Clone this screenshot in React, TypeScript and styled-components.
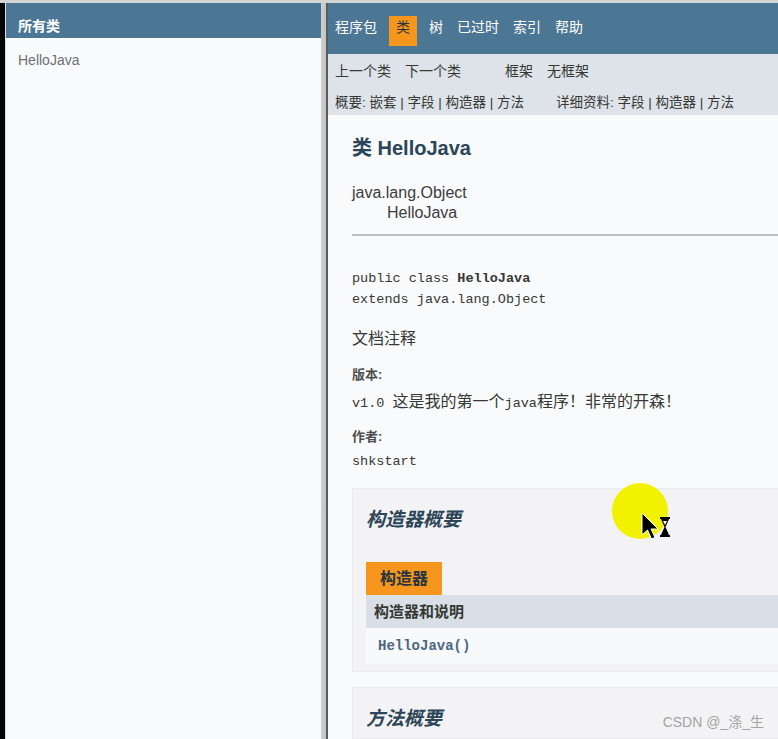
import React from "react";
import styled, { createGlobalStyle } from "styled-components";

const GlobalStyle = createGlobalStyle`
  html, body {
    margin: 0;
    padding: 0;
    overflow: hidden;
    background: #d4d4d4;
  }
  body {
    font-family: "Liberation Sans", "Noto Sans CJK SC", sans-serif;
  }
`;

const SANS = `"Liberation Sans", "Noto Sans CJK SC", sans-serif`;
const MONO = `"Liberation Mono", "Noto Sans CJK SC", monospace`;
const BLUE = "#4b7694";

const Screen = styled.div`
  position: relative;
  width: 778px;
  height: 739px;
  padding-top: 3px;
  box-sizing: border-box;
  overflow: hidden;
`;

const Frames = styled.div`
  display: flex;
  height: 736px;
`;

const BlackEdge = styled.div`
  width: 5px;
  background: #050505;
`;

const LeftFrame = styled.div`
  width: 316px;
  background: #f9fafc;
  border-left: 1px solid #dcdcdc;
  box-sizing: border-box;
`;

const Splitter = styled.div`
  width: 7px;
  background: linear-gradient(to right, #cfcfcf 0, #c4c4c4 5px, #5c5c5c 5px, #5c5c5c 7px);
`;

const RightFrame = styled.div`
  flex: 1;
  background: #f9fafc;
  overflow: hidden;
`;

const Bar = styled.div`
  background: ${BLUE};
  color: #fff;
  font: bold 14px ${SANS};
  height: 35px;
  padding: 12px 12px 0;
  box-sizing: border-box;
`;

const ClassLink = styled.div`
  padding: 14px 12px 0;
  font: 14px ${SANS};
  color: #6e6f72;
`;

const TopNav = styled.ul`
  display: flex;
  margin: 0;
  padding: 13px 0 0;
  height: 51px;
  box-sizing: border-box;
  background: ${BLUE};
  list-style: none;
`;

const NavItem = styled.li<{ $active?: boolean }>`
  height: 30px;
  line-height: 30px;
  padding: 0 7px;
  margin: ${(p) => (p.$active ? "0 5px" : "0")};
  font: 14px ${SANS};
  color: ${(p) => (p.$active ? "#253441" : "#ffffff")};
  background: ${(p) => (p.$active ? "#f6961d" : "transparent")};
`;

const SubNav = styled.div`
  background: #dee3e9;
  padding: 6px 0 4px;
  height: 61px;
  box-sizing: border-box;
`;

const SubRow = styled.div`
  display: flex;
  height: 20px;
  align-items: center;
  & + & {
    margin-top: 11px;
  }
`;

const SubGroup = styled.div<{ $gap?: number }>`
  display: flex;
  margin-left: ${(p) => p.$gap ?? 0}px;
`;

const SubItem = styled.span<{ $size?: number }>`
  padding: 0 7px;
  font: ${(p) => p.$size ?? 14}px ${SANS};
  color: #353833;
  white-space: pre;
`;

const Content = styled.div`
  width: 640px;
  padding: 21px 0 0 24px;
`;

const Title = styled.h2`
  margin: 0;
  font: bold 20px/24px ${SANS};
  color: #2c4557;
`;

const Inherit = styled.div`
  margin-top: 23px;
  font: 16px/20px ${SANS};
  color: #3d3d3d;
`;

const InheritChild = styled.div`
  padding-left: 35px;
`;

const Rule = styled.hr`
  margin: 11px 0 0;
  border: none;
  height: 2px;
  background: #bdbdbd;
`;

const Code = styled.pre`
  margin: 32px 0 0;
  font: 13.5px/21px ${MONO};
  color: #353833;
  b {
    font-weight: bold;
  }
`;

const Comment = styled.div`
  margin-top: 18px;
  font: 16px/22px ${SANS};
  color: #353833;
`;

const Label = styled.div<{ $top: number }>`
  margin-top: ${(p) => p.$top}px;
  font: bold 13px/18px ${SANS};
  color: #4e4e4e;
`;

const Value = styled.div<{ $top: number }>`
  margin-top: ${(p) => p.$top}px;
  font: 13.5px/22px ${MONO};
  color: #353833;
`;

const Cjk = styled.span`
  font: 16px ${SANS};
`;

const Block = styled.div`
  margin-top: 15px;
  padding: 19px 0 7px 13px;
  background: #f3f3f5;
  border: 1px solid #ebebed;
  & + & {
    margin-top: 15px;
  }
`;

const BlockTitle = styled.h3`
  margin: 0;
  font: italic bold 19px/24px ${SANS};
  color: #2c4557;
`;

const Tab = styled.div`
  display: inline-block;
  margin-top: 30px;
  height: 33px;
  line-height: 33px;
  padding: 0 14px;
  background: #f6961d;
  font: bold 16px/33px ${SANS};
  color: #253441;
`;

const HeadRow = styled.div`
  height: 33px;
  line-height: 33px;
  padding-left: 8px;
  background: #d9dfe6;
  font: bold 15px/33px ${SANS};
  color: #353833;
`;

const BodyRow = styled.div`
  height: 36px;
  line-height: 36px;
  padding-left: 12px;
  background: #f8f9fb;
  font: bold 14px/36px ${MONO};
  color: #4a6782;
`;

const Highlight = styled.div`
  position: absolute;
  left: 612px;
  top: 483px;
  width: 56px;
  height: 56px;
  border-radius: 50%;
  background: #f2f200;
`;

const Pointer = styled.svg`
  position: absolute;
  left: 640px;
  top: 511px;
`;

const Watermark = styled.div`
  position: absolute;
  right: 14px;
  bottom: 8px;
  font: 14px ${SANS};
  color: #a3a3a3;
`;

const App: React.FC = () => {
  return (
    <>
      <GlobalStyle />
      <Screen>
        <Frames>
          <BlackEdge />
          <LeftFrame>
            <Bar>所有类</Bar>
            <ClassLink>HelloJava</ClassLink>
          </LeftFrame>
          <Splitter />
          <RightFrame>
            <TopNav>
              <NavItem>程序包</NavItem>
              <NavItem $active>类</NavItem>
              <NavItem>树</NavItem>
              <NavItem>已过时</NavItem>
              <NavItem>索引</NavItem>
              <NavItem>帮助</NavItem>
            </TopNav>
            <SubNav>
              <SubRow>
                <SubGroup>
                  <SubItem>上一个类</SubItem>
                  <SubItem>下一个类</SubItem>
                </SubGroup>
                <SubGroup $gap={30}>
                  <SubItem>框架</SubItem>
                  <SubItem>无框架</SubItem>
                </SubGroup>
              </SubRow>
              <SubRow>
                <SubItem $size={13.5}>概要: 嵌套 | 字段 | 构造器 | 方法</SubItem>
                <SubGroup $gap={18}>
                  <SubItem $size={13.5}>详细资料: 字段 | 构造器 | 方法</SubItem>
                </SubGroup>
              </SubRow>
            </SubNav>
            <Content>
              <Title>类 HelloJava</Title>
              <Inherit>
                java.lang.Object
                <InheritChild>HelloJava</InheritChild>
              </Inherit>
              <Rule />
              <Code>
                public class <b>HelloJava</b>
                {"\n"}extends java.lang.Object
              </Code>
              <Comment>文档注释</Comment>
              <Label $top={16}>版本:</Label>
              <Value $top={4}>
                v1.0 <Cjk>这是我的第一个</Cjk>java<Cjk>程序！非常的开森！</Cjk>
              </Value>
              <Label $top={13}>作者:</Label>
              <Value $top={5}>shkstart</Value>
              <Block>
                <BlockTitle>构造器概要</BlockTitle>
                <Tab>构造器</Tab>
                <HeadRow>构造器和说明</HeadRow>
                <BodyRow>HelloJava()</BodyRow>
              </Block>
              <Block>
                <BlockTitle>方法概要</BlockTitle>
              </Block>
            </Content>
          </RightFrame>
        </Frames>
        <Highlight />
        <Pointer width="34" height="32" viewBox="0 0 34 32">
          <path
            d="M2 2 L2 24 L7.5 19 L11.5 28 L15 26.5 L11 18 L18 18 Z"
            fill="#000"
            stroke="#fff"
            strokeWidth="1"
          />
          <rect x="20" y="6" width="10" height="2" fill="#000" />
          <path d="M21 8 L29 8 L25.5 16 L29 24 L21 24 L24.5 16 Z" fill="#000" />
          <path d="M23 10 L27 10 L25 14 Z" fill="#fff" />
          <rect x="20" y="24" width="10" height="2" fill="#000" />
        </Pointer>
        <Watermark>CSDN @_涤_生</Watermark>
      </Screen>
    </>
  );
};

export default App;
